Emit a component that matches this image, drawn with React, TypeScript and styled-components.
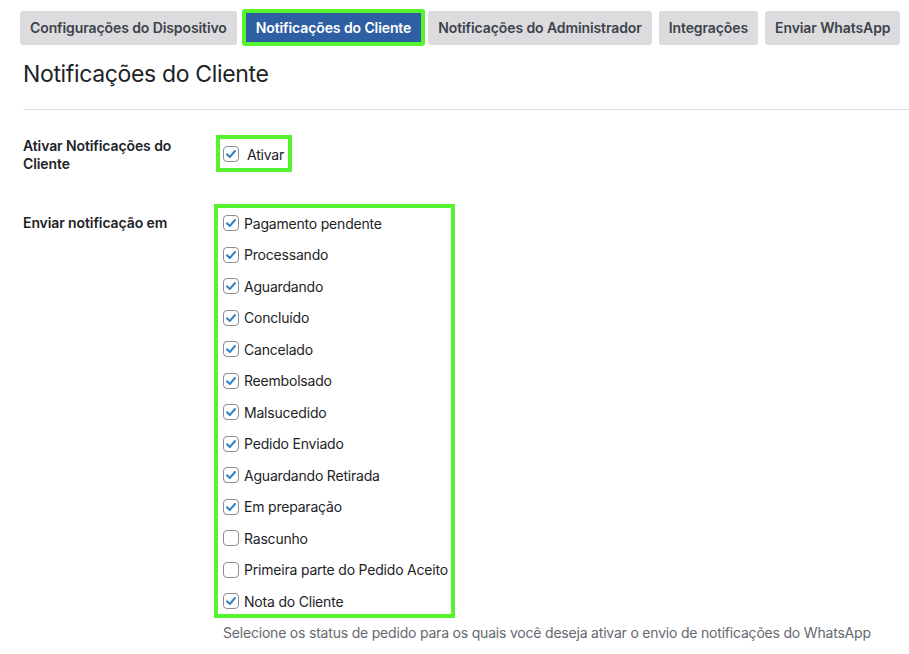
import styled, { createGlobalStyle } from "styled-components";

const GlobalStyle = createGlobalStyle`
  body {
    margin: 0;
    background: #ffffff;
    font-family: Inter, "Noto Sans", "Liberation Sans", sans-serif;
    color: #1d2327;
  }
`;

const Page = styled.div`
  padding: 0 0 0 23px;
`;

const TabBar = styled.nav`
  display: flex;
  align-items: center;
  margin: 9px 0 0 -3px;
  height: 37px;
`;

const Tab = styled.a<{ $active?: boolean }>`
  display: flex;
  align-items: center;
  box-sizing: border-box;
  height: ${({ $active }) => ($active ? "37px" : "34px")};
  padding: 0 10px;
  margin-right: ${({ $active }) => ($active ? "3px" : "7px")};
  margin-left: ${({ $active }) => ($active ? "-2px" : "0")};
  border-radius: 3px;
  border: ${({ $active }) => ($active ? "4px solid #55f42f" : "none")};
  background: ${({ $active }) => ($active ? "#2e5fa3" : "#dcdcde")};
  color: ${({ $active }) => ($active ? "#ffffff" : "#3c434a")};
  font-size: 14px;
  font-weight: 600;
  letter-spacing: -0.1px;
  white-space: nowrap;
  cursor: pointer;
`;

const Title = styled.h1`
  margin: 14px 0 0;
  font-size: 23px;
  font-weight: 400;
  line-height: 29px;
  letter-spacing: -0.35px;
  color: #1d2327;
`;

const Divider = styled.hr`
  margin: 20px 0 0;
  border: none;
  border-top: 1px solid #dcdcde;
`;

const FormRow = styled.div<{ $top: number }>`
  display: grid;
  grid-template-columns: 191px auto;
  align-items: start;
  margin-top: ${({ $top }) => $top}px;
`;

const RowLabel = styled.div<{ $top: number }>`
  padding-top: ${({ $top }) => $top}px;
  font-size: 14px;
  font-weight: 600;
  line-height: 18px;
  letter-spacing: -0.1px;
  color: #1d2327;
  width: 160px;
`;

const Field = styled.div`
  display: flex;
  flex-direction: column;
  align-items: flex-start;
`;

const Highlight = styled.div<{ $pad: string; $width: number; $shift: number }>`
  display: flex;
  flex-direction: column;
  box-sizing: border-box;
  border: 4px solid #55f42f;
  padding: ${({ $pad }) => $pad};
  width: ${({ $width }) => $width}px;
  margin-left: ${({ $shift }) => $shift}px;
`;

const OptionList = styled.div`
  display: flex;
  flex-direction: column;
  gap: 5.5px;
`;

const Option = styled.label<{ $gap: number }>`
  display: flex;
  align-items: center;
  gap: ${({ $gap }) => $gap}px;
  height: 26px;
  font-size: 14px;
  letter-spacing: -0.2px;
  color: #1d2327;
  white-space: nowrap;
  cursor: pointer;
`;

const Box = styled.span`
  display: inline-flex;
  flex-shrink: 0;
  align-items: center;
  justify-content: center;
  box-sizing: border-box;
  width: 16px;
  height: 16px;
  border: 1px solid #8c8f94;
  border-radius: 4px;
  background: #ffffff;
`;

const Description = styled.p`
  margin: 5px 0 0 9px;
  font-size: 14px;
  line-height: 20px;
  letter-spacing: -0.2px;
  color: #646970;
  white-space: nowrap;
`;

function Checkbox({ checked }: { checked: boolean }) {
  return (
    <Box>
      {checked && (
        <svg width="12" height="12" viewBox="0 0 12 12">
          <path
            d="M2 6.2 L4.8 9 L10 3"
            fill="none"
            stroke="#3582c4"
            strokeWidth="2"
            strokeLinecap="round"
            strokeLinejoin="round"
          />
        </svg>
      )}
    </Box>
  );
}

const tabs = [
  "Configurações do Dispositivo",
  "Notificações do Cliente",
  "Notificações do Administrador",
  "Integrações",
  "Enviar WhatsApp",
];

const statuses: [string, boolean][] = [
  ["Pagamento pendente", true],
  ["Processando", true],
  ["Aguardando", true],
  ["Concluído", true],
  ["Cancelado", true],
  ["Reembolsado", true],
  ["Malsucedido", true],
  ["Pedido Enviado", true],
  ["Aguardando Retirada", true],
  ["Em preparação", true],
  ["Rascunho", false],
  ["Primeira parte do Pedido Aceito", false],
  ["Nota do Cliente", true],
];

export default function App() {
  return (
    <Page>
      <GlobalStyle />
      <TabBar>
        {tabs.map((t) => (
          <Tab key={t} $active={t === "Notificações do Cliente"}>
            {t}
          </Tab>
        ))}
      </TabBar>
      <Title>Notificações do Cliente</Title>
      <Divider />

      <FormRow $top={25}>
        <RowLabel $top={2}>Ativar Notificações do Cliente</RowLabel>
        <Field>
          <Highlight $pad="2px 5px 1px 3px" $width={76} $shift={2}>
            <Option $gap={8}>
              <Checkbox checked />
              Ativar
            </Option>
          </Highlight>
        </Field>
      </FormRow>

      <FormRow $top={31}>
        <RowLabel $top={10}>Enviar notificação em</RowLabel>
        <Field>
          <Highlight $pad="2px 4px 0 5px" $width={241} $shift={0}>
            <OptionList>
              {statuses.map(([name, on]) => (
                <Option key={name} $gap={5}>
                  <Checkbox checked={on} />
                  {name}
                </Option>
              ))}
            </OptionList>
          </Highlight>
          <Description>
            Selecione os status de pedido para os quais você deseja ativar o
            envio de notificações do WhatsApp
          </Description>
        </Field>
      </FormRow>
    </Page>
  );
}
